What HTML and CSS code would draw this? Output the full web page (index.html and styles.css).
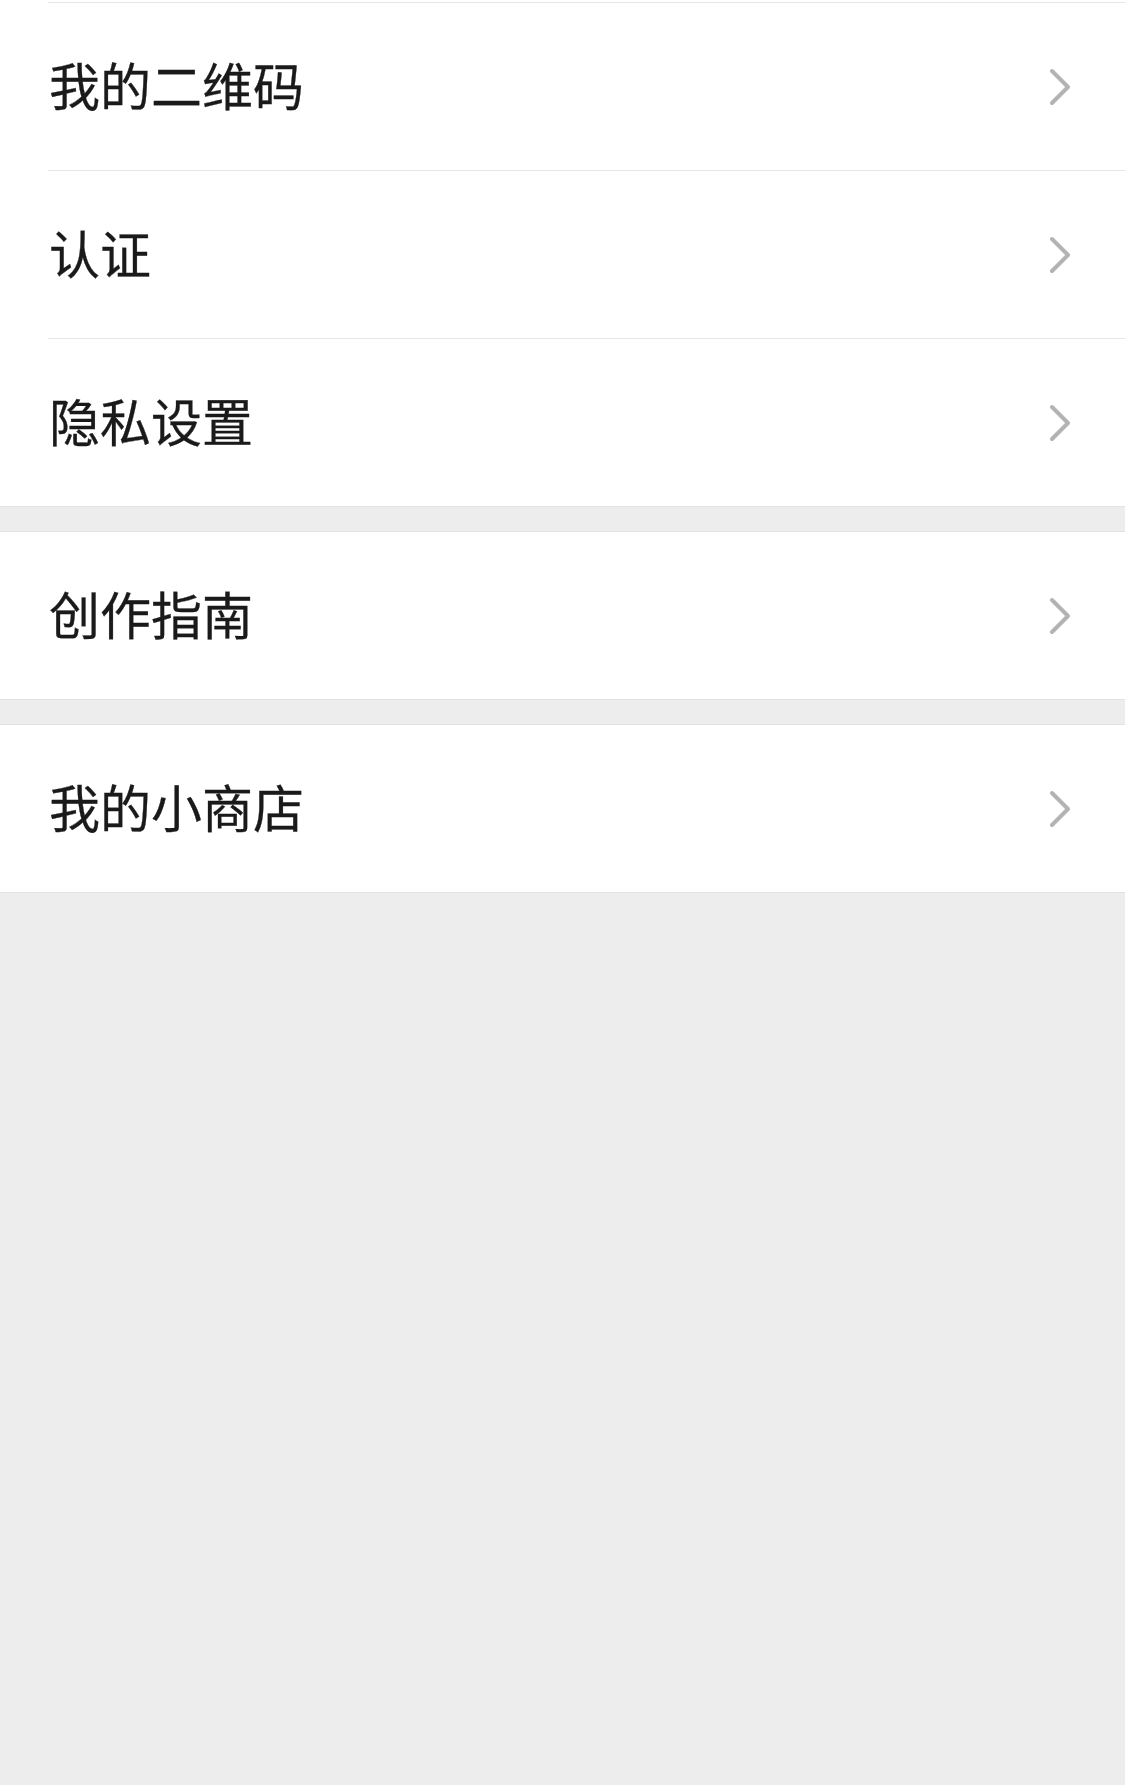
FILE: index.html
```html
<!DOCTYPE html>
<html lang="zh-CN">
<head>
  <meta charset="UTF-8" />
  <meta name="viewport" content="width=device-width, initial-scale=1.0" />
  <title>设置</title>
  <link rel="stylesheet" href="styles.css">
</head>
<body>

  <div class="group first">
    <div class="item">
      <span class="label">我的二维码</span>
      <svg class="arrow" viewBox="0 0 24 40"><polyline points="4,4 20,20 4,36" /></svg>
    </div>
    <div class="item">
      <span class="label">认证</span>
      <svg class="arrow" viewBox="0 0 24 40"><polyline points="4,4 20,20 4,36" /></svg>
    </div>
    <div class="item">
      <span class="label">隐私设置</span>
      <svg class="arrow" viewBox="0 0 24 40"><polyline points="4,4 20,20 4,36" /></svg>
    </div>
  </div>

  <div class="group">
    <div class="item">
      <span class="label">创作指南</span>
      <svg class="arrow" viewBox="0 0 24 40"><polyline points="4,4 20,20 4,36" /></svg>
    </div>
  </div>

  <div class="group">
    <div class="item">
      <span class="label">我的小商店</span>
      <svg class="arrow" viewBox="0 0 24 40"><polyline points="4,4 20,20 4,36" /></svg>
    </div>
  </div>

</body>
</html>
```

FILE: styles.css
```css
html, body {
  margin: 0;
  background: #ededed;
  font-family: "Noto Sans CJK SC", "Noto Sans", sans-serif;
}
.group {
  background: #fff;
  border-top: 1px solid #e2e2e2;
  border-bottom: 1px solid #e2e2e2;
  margin-top: 24px;
}
.group.first {
  margin-top: 0;
  border-top: none;
  padding-top: 2px;
}
.group.first .item:first-child {
  border-top: 1px solid #e5e5e5;
}
.item {
  display: flex;
  align-items: center;
  justify-content: space-between;
  height: 167px;
  margin-left: 48px;
  padding-right: 53px;
  border-bottom: 1px solid #e5e5e5;
}
.item:last-child {
  border-bottom: none;
}
.label {
  font-size: 51px;
  color: #1a1a1a;
  margin-left: 1px;
  margin-bottom: 6px;
  -webkit-text-stroke: 0.3px #1a1a1a;
}
.arrow {
  width: 24px;
  height: 40px;
  fill: none;
  stroke: #b3b3b3;
  stroke-width: 4;
  stroke-linecap: round;
  stroke-linejoin: round;
}
```
